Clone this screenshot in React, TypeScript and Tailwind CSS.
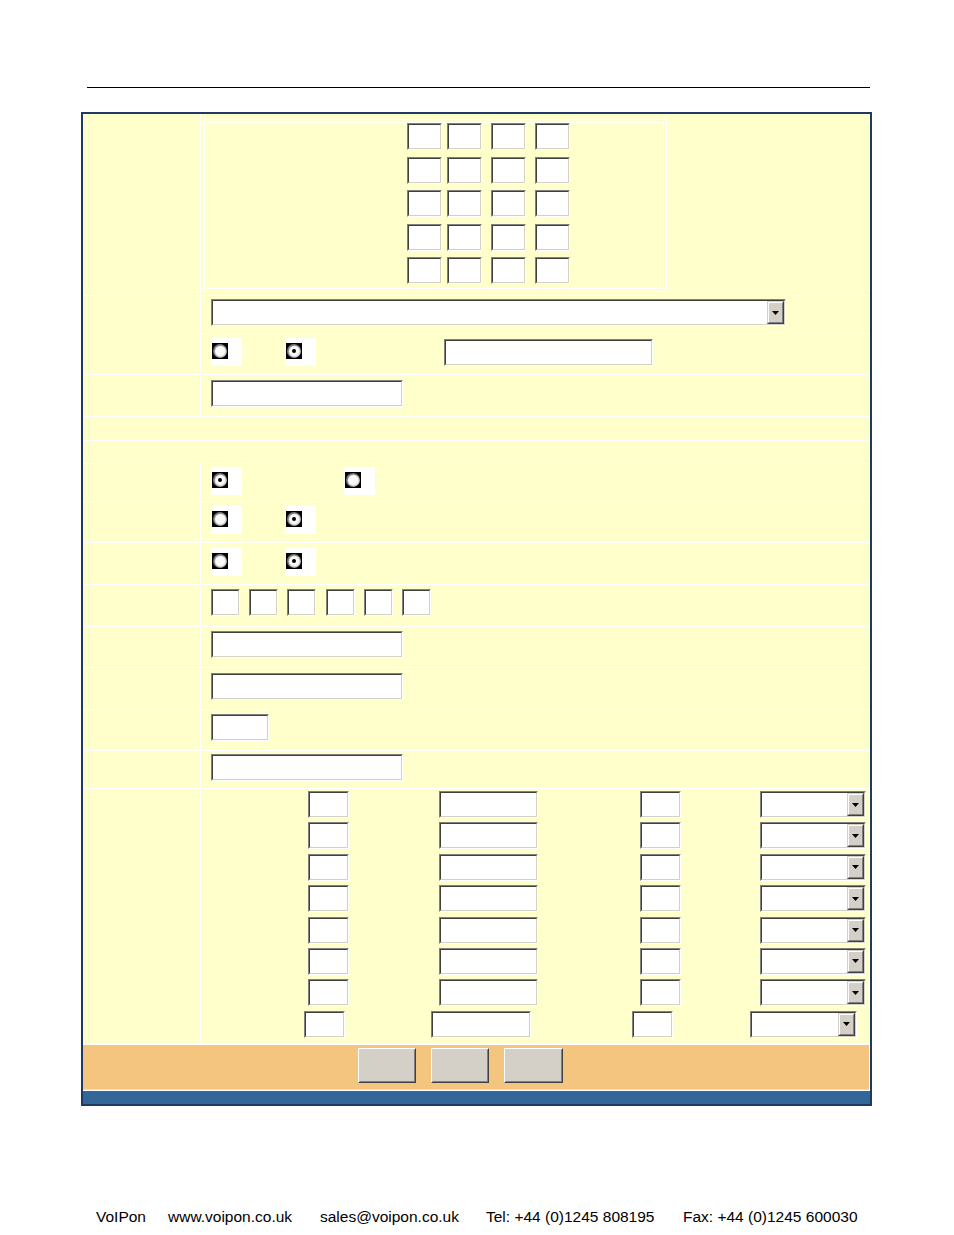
import React from "react";

const Field = ({ cls }: { cls: string }) => (
  <div className={`${cls} h-[27px] shrink-0 border border-t-[#808080] border-l-[#808080] border-r-white border-b-white`}>
    <div className="h-full w-full bg-white border border-t-[#404040] border-l-[#404040] border-r-[#d4d0c8] border-b-[#d4d0c8]" />
  </div>
);

const Select = ({ cls }: { cls: string }) => (
  <div className={`${cls} h-[27px] shrink-0 border border-t-[#808080] border-l-[#808080] border-r-white border-b-white`}>
    <div className="h-full w-full bg-white flex justify-end border border-t-[#404040] border-l-[#404040] border-r-[#d4d0c8] border-b-[#d4d0c8]">
      <div className="w-[17px] h-full bg-[#d4d0c8] border border-t-[#d4d0c8] border-l-[#d4d0c8] border-r-[#404040] border-b-[#404040]">
        <div className="h-full w-full flex items-center justify-center border border-t-white border-l-white border-r-[#808080] border-b-[#808080]">
          <svg width="7" height="4" viewBox="0 0 7 4">
            <path d="M0 0H7L3.5 4Z" fill="#000" />
          </svg>
        </div>
      </div>
    </div>
  </div>
);

const Radio = ({ checked, cls = "" }: { checked?: boolean; cls?: string }) => (
  <div className={`${cls} w-[31px] h-[28px] bg-white pl-px pt-[5px] shrink-0`}>
    <svg width="16" height="16" viewBox="0 0 16 16">
      <rect width="16" height="16" fill="#000" />
      <circle cx="8" cy="8" r="7" fill="#7a7a7a" />
      <circle cx="8.6" cy="8.6" r="6" fill="#d0d0d0" />
      <circle cx="8.3" cy="8.3" r="5" fill="#fafafa" />
      {checked && <circle cx="8" cy="8" r="2" fill="#000" />}
    </svg>
  </div>
);

const Button = ({ cls }: { cls: string }) => (
  <div className={`${cls} h-[35px] shrink-0 bg-[#d4d0c8] border border-t-white border-l-white border-r-[#404040] border-b-[#404040]`}>
    <div className="h-full w-full border border-t-[#d4d0c8] border-l-[#d4d0c8] border-r-[#808080] border-b-[#808080]" />
  </div>
);

const Y = "bg-[#ffffcc]";

const Row = ({ h, children }: { h: string; children?: React.ReactNode }) => (
  <div className={`flex gap-px ${h}`}>
    <div className={`w-[117px] shrink-0 ${Y}`} />
    <div className={`flex-1 ${Y} pl-[10px]`}>{children}</div>
  </div>
);

export default function App() {
  const gridRows = [0, 1, 2, 3, 4, 5, 6];
  return (
    <div className="w-[954px] min-h-[1235px] bg-white" style={{ fontFamily: '"Liberation Sans", Arial, sans-serif' }}>
      <div className="pt-[87px]">
        <div className="ml-[87px] w-[783px] h-px bg-black" />
      </div>

      <div className="mt-[24px] ml-[81px] w-[791px] border-2 border-[#1c3a63]">
        <div className="flex flex-col gap-px bg-white pr-px">
          {/* Row A */}
          <div className="flex gap-px h-[181px]">
            <div className={`w-[117px] shrink-0 ${Y}`} />
            <div className={`flex-1 ${Y} pl-[3px] pt-[5px]`}>
              <div className="w-[463px] h-[173px] border border-white p-[2px]">
                <div className="h-full w-full border border-white">
                  <div className="flex flex-col gap-[6.5px] pl-[199px] pt-0">
                    {[0, 1, 2, 3, 4].map((r) => (
                      <div key={r} className="flex">
                        <Field cls="w-[35px]" />
                        <Field cls="w-[35px] ml-[5px]" />
                        <Field cls="w-[35px] ml-[9px]" />
                        <Field cls="w-[35px] ml-[9px]" />
                      </div>
                    ))}
                  </div>
                </div>
              </div>
            </div>
          </div>

          {/* Rows B + C */}
          <div className="flex gap-px h-[78px]">
            <div className={`w-[117px] shrink-0 ${Y}`} />
            <div className="flex-1 flex flex-col gap-px">
              <div className={`h-[37px] ${Y} pl-[10px] pt-[3px]`}>
                <Select cls="w-[575px]" />
              </div>
              <div className={`h-[40px] ${Y} pl-[10px] pt-[4px] flex items-start`}>
                <Radio />
                <Radio checked cls="ml-[43px]" />
                <Field cls="w-[209px] ml-[128px] mt-px" />
              </div>
            </div>
          </div>

          {/* Row D */}
          <Row h="h-[41px]">
            <div className="pt-[5px]">
              <Field cls="w-[192px]" />
            </div>
          </Row>

          {/* Rows E, F */}
          <div className={`h-[23px] ${Y}`} />
          <div className={`h-[22px] ${Y}`} />

          {/* Row G */}
          <Row h="h-[37px]">
            <div className="pt-[3px] flex">
              <Radio checked />
              <Radio cls="ml-[102px]" />
            </div>
          </Row>

          {/* Row H */}
          <Row h="h-[40px]">
            <div className="pt-[4px] flex">
              <Radio />
              <Radio checked cls="ml-[43px]" />
            </div>
          </Row>

          {/* Row I */}
          <Row h="h-[41px]">
            <div className="pt-[5px] flex">
              <Radio />
              <Radio checked cls="ml-[43px]" />
            </div>
          </Row>

          {/* Row J */}
          <Row h="h-[41px]">
            <div className="pt-[4px] flex gap-[9.2px]">
              {[0, 1, 2, 3, 4, 5].map((i) => (
                <Field key={i} cls="w-[29px]" />
              ))}
            </div>
          </Row>

          {/* Row K */}
          <Row h="h-[40px]">
            <div className="pt-[4px]">
              <Field cls="w-[192px]" />
            </div>
          </Row>

          {/* Row L */}
          <Row h="h-[41px]">
            <div className="pt-[5px]">
              <Field cls="w-[192px]" />
            </div>
          </Row>

          {/* Row M */}
          <Row h="h-[40px]">
            <div className="pt-[4px]">
              <Field cls="w-[58px]" />
            </div>
          </Row>

          {/* Row N */}
          <Row h="h-[37px]">
            <div className="pt-[3px]">
              <Field cls="w-[192px]" />
            </div>
          </Row>

          {/* Row O */}
          <div className="flex gap-px h-[254px]">
            <div className={`w-[117px] shrink-0 ${Y}`} />
            <div className={`flex-1 ${Y} pt-[2px] flex flex-col gap-[4.4px]`}>
              {gridRows.map((r) => (
                <div key={r} className="flex">
                  <Field cls="w-[41px] ml-[107px]" />
                  <Field cls="w-[99px] ml-[90px]" />
                  <Field cls="w-[41px] ml-[102px]" />
                  <Select cls="w-[106px] ml-[79px]" />
                </div>
              ))}
              <div className="flex">
                <Field cls="w-[41px] ml-[103px]" />
                <Field cls="w-[100px] ml-[86px]" />
                <Field cls="w-[41px] ml-[101px]" />
                <Select cls="w-[107px] ml-[77px]" />
              </div>
            </div>
          </div>

          {/* Orange button row */}
          <div className="mt-px h-[45px] bg-[#f3c57e] border border-[#f3c57e] border-b-[#f8d9a4]">
            <div className="flex pl-[274px] pt-[2px]">
              <Button cls="w-[58px]" />
              <Button cls="w-[58px] ml-[15px]" />
              <Button cls="w-[59px] ml-[15px]" />
            </div>
          </div>

          {/* Blue bar */}
          <div className="h-[13px] bg-[#336699] -mr-px" />
        </div>
      </div>

      <div className="mt-[102px] flex pl-[96px] text-[15.5px] leading-[18px] text-black whitespace-nowrap">
        <span className="w-[72px] shrink-0">VoIPon</span>
        <span className="w-[152px] shrink-0">www.voipon.co.uk</span>
        <span className="w-[166px] shrink-0">sales@voipon.co.uk</span>
        <span className="w-[197px] shrink-0">Tel: +44 (0)1245 808195</span>
        <span className="shrink-0">Fax: +44 (0)1245 600030</span>
      </div>
    </div>
  );
}
